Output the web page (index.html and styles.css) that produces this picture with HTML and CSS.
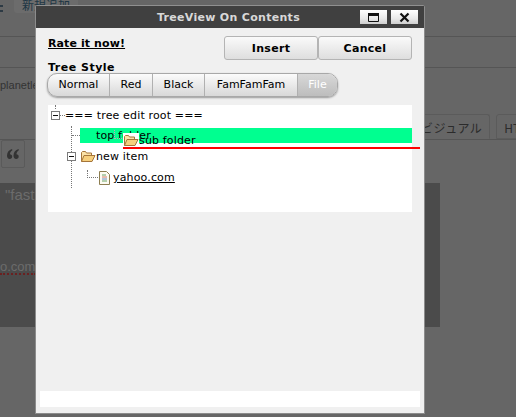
FILE: index.html
```html
<!DOCTYPE html>
<html>
  <head>
    <title>TreeView On Contents</title>
    <meta name="viewport" content="width=device-width, initial-scale=1.0" />
    <link rel="stylesheet" href="styles.css">
  </head>
  <body>
    <!-- Dimmed page behind the dialog -->
    <div class="page">
      <div class="page-top"><span class="menu-mark"></span><span class="new-link">新規追加</span></div>
      <div class="page-title"></div>
      <div class="page-url">planetle</div>
      <div class="page-tabs">
        <span class="tab tab-active">ビジュアル</span>
        <span class="tab">HT</span>
      </div>
      <div class="page-toolbar">
        <span class="quote-button">
          <svg width="12" height="10" viewBox="0 0 12 10"><path d="M5 0C2 1 0 3 0 6.500 0 8.500 1 10 2.700 10 4.200 10 5.200 9 5.200 7.600 5.200 6.200 4.200 5.300 3 5.300 3 3.500 3.900 2.300 5.400 1.300zM11.500 0C8.500 1 6.500 3 6.500 6.500 6.500 8.500 7.500 10 9.200 10 10.700 10 11.700 9 11.700 7.600 11.700 6.200 10.700 5.300 9.500 5.300 9.500 3.500 10.400 2.300 11.900 1.300z" fill="#333" /></svg>
        </span>
      </div>
      <div class="editor">
        <div class="editor-quote">"fast</div>
        <div class="editor-link">o.com</div>
      </div>
    </div>

    <div class="dialog">
      <div class="dialog-title">
        <span class="dialog-name">TreeView On Contents</span>
        <span class="win-button">
          <svg width="13" height="11" viewBox="0 0 13 11"><path d="M1.500 1.500h10v8h-10z" fill="none" stroke="#111" /><path d="M1 1h11v3H1z" fill="#111" /></svg>
        </span>
        <span class="win-button">
          <svg width="13" height="11" viewBox="0 0 13 11"><path d="M2.500 1.500l8 8M10.500 1.500l-8 8" fill="none" stroke="#111" stroke-width="2.200" /></svg>
        </span>
      </div>

      <div class="dialog-head">
        <a class="rate-link" href="#">Rate it now!</a>
        <div class="actions">
          <button class="action-button">Insert</button>
          <button class="action-button">Cancel</button>
        </div>
      </div>

      <div class="style-label">Tree Style</div>
      <div class="style-bar">
        <span class="style-item style-normal">Normal</span>
        <span class="style-item style-red">Red</span>
        <span class="style-item style-black">Black</span>
        <span class="style-item style-fam">FamFamFam</span>
        <span class="style-item style-file">File</span>
      </div>

      <div class="tree">
        <span class="guide guide-root"></span>
        <span class="guide guide-children"></span>
        <div class="tree-row row-root">
          <span class="toggle"></span><span class="dash dash-root"></span><span>=== tree edit root ===</span>
        </div>
        <div class="tree-row row-top">
          <span class="dash dash-top"></span><span class="top-label">top folder</span>
        </div>
        <div class="tree-row row-new">
          <span class="toggle"></span>
          <svg class="folder" width="16" height="13" viewBox="0 0 16 13"><path d="M1.500 11.500v-9l1-1h3l1 1.500h5v2" fill="#fbe3a8" stroke="#a5753a" /><path d="M1.500 11.500l2.500-6h11l-3 6z" fill="#f6cf7d" stroke="#a5753a" /></svg>
          <span>new item</span>
        </div>
        <div class="tree-row row-link">
          <span class="dash dash-link"></span>
          <svg class="page-icon" width="11" height="14" viewBox="0 0 11 14">
            <path d="M.5.5h7l3 3v10H.5z" fill="#fdfbf2" stroke="#8c7d50" />
            <path d="M3 4h4" stroke="#6aa56a" /><path d="M3 6h5" stroke="#d27a6a" /><path d="M3 8h5" stroke="#6a8fc0" /><path d="M3 10h5" stroke="#6aa56a" />
          </svg>
          <a class="tree-link" href="#">yahoo.com</a>
        </div>

        <!-- Node being dragged, with its drop marker -->
        <span class="drag-dash"></span>
        <div class="drag-node">
          <svg class="folder drag-folder" width="16" height="13" viewBox="0 0 16 13"><path d="M1.500 11.500v-9l1-1h3l1 1.500h5v2" fill="#fbe3a8" stroke="#a5753a" /><path d="M1.500 11.500l2.500-6h11l-3 6z" fill="#f6cf7d" stroke="#a5753a" /></svg>
          <span>sub folder</span>
        </div>
        <div class="drop-line"></div>
      </div>

      <div class="status"></div>
    </div>
  </body>
</html>
```

FILE: styles.css
```css
/* Base styles */
html,
body {
  margin: 0;
  padding: 0;
  height: 100%;
  overflow: hidden;
}

body {
  background-color: #666666;
  font-family: "DejaVu Sans", Verdana, sans-serif;
  font-size: 11px;
  color: #000;
}

/* Page behind the dialog */
.page {
  height: 417px;
  overflow: hidden;
  color: #3a3a3a;
}

.page-top {
  height: 36px;
  border-bottom: 1px solid #555;
  display: flex;
  align-items: flex-start;
}

.menu-mark {
  width: 3px;
  height: 3px;
  margin-top: 5px;
  border-top: 2px solid #2d3a44;
  border-bottom: 2px solid #2d3a44;
}

.new-link {
  margin-left: 11px;
  padding: 0 8px;
  height: 13px;
  background-color: #6c6c6c;
  border-radius: 0 0 3px 3px;
  font-family: "Noto Sans CJK JP", sans-serif;
  font-size: 12px;
  line-height: 9px;
  color: #1d3644;
  overflow: hidden;
}

.page-title {
  height: 30px;
  border-bottom: 1px solid #555;
}

.page-url {
  height: 37px;
  padding-top: 9px;
  font-family: "Liberation Sans", sans-serif;
  font-size: 11px;
  line-height: 17px;
  color: #333;
}

.page-tabs {
  height: 25px;
  padding-left: 420px;
  display: flex;
  gap: 6px;
  border-bottom: 1px solid #555;
  white-space: nowrap;
}

.tab {
  padding: 0 7px;
  height: 25px;
  box-sizing: border-box;
  border: 1px solid #5b5b5b;
  border-radius: 3px 3px 0 0;
  font-family: "Noto Sans CJK JP", sans-serif;
  font-size: 12px;
  line-height: 25px;
  color: #2b2b2b;
}

.tab-active {
  width: 72px;
  text-align: right;
  padding: 0 7px 0 0;
  letter-spacing: 0.5px;
  border-bottom-color: #666;
}

.page-toolbar {
  height: 43px;
  padding-left: 1px;
  box-sizing: border-box;
}

.quote-button {
  display: flex;
  align-items: center;
  justify-content: center;
  width: 24px;
  height: 28px;
  border: 1px solid #5a5a5a;
  border-radius: 2px;
  box-sizing: border-box;
}

.editor {
  width: 440px;
  height: 144px;
  background-color: #4b4b4b;
  font-family: "Liberation Sans", sans-serif;
  color: #6c6c6c;
}

.editor-quote {
  padding: 2px 0 0 5px;
  font-size: 15px;
  line-height: 19px;
}

.editor-link {
  margin-top: 56px;
  width: 36px;
  font-size: 13px;
  line-height: 13px;
  border-bottom: 2px dotted #6b2020;
}

/* Dialog */
.dialog {
  position: absolute;
  left: 35px;
  top: 5px;
  width: 390px;
  height: 409px;
  box-sizing: border-box;
  background-color: #f0f0f0;
  border: 1px solid #8c8c8c;
  border-top-color: #909090;
  border-radius: 3px 3px 0 0;
  padding: 0 4px;
}

.dialog-title {
  display: flex;
  align-items: center;
  height: 22px;
  margin: 0 -4px;
  padding: 0 6px 0 0;
  background-color: #404040;
  color: #d8d8d8;
  font-weight: bold;
  font-size: 11px;
  letter-spacing: 0.3px;
}

.dialog-name {
  flex: 1;
  text-align: center;
  padding-left: 65px;
}

.win-button {
  display: flex;
  align-items: center;
  justify-content: center;
  width: 27px;
  height: 14px;
  margin-left: 4px;
  background: linear-gradient(#fff, #e9e9e9 60%, #cfcfcf);
}

.dialog-head {
  display: flex;
  justify-content: space-between;
  padding: 8px 8px 0 8px;
  height: 32px;
}

.rate-link {
  margin-top: 1px;
  height: 14px;
  color: #000;
  font-weight: bold;
  font-size: 11px;
  line-height: 14px;
  letter-spacing: 0.1px;
}

.actions {
  display: flex;
}

.action-button {
  width: 94px;
  height: 24px;
  padding: 0;
  background: linear-gradient(#fafafa, #dedede);
  border: 1px solid #b4b4b4;
  border-radius: 3px;
  font-family: inherit;
  font-size: 11px;
  font-weight: bold;
  letter-spacing: 0.3px;
  color: #000;
}

.style-label {
  margin-top: -6px;
  padding-left: 8px;
  font-weight: bold;
  font-size: 11px;
  line-height: 12px;
  letter-spacing: 0.5px;
}

.style-bar {
  display: inline-flex;
  height: 22px;
  margin: -1px 0 0 7px;
  border: 1px solid #a8a8a8;
  border-radius: 10px;
  box-shadow: 0 1px 2px #999;
  background: linear-gradient(#fbfbfb, #d8d8d8);
  overflow: hidden;
}

.style-item {
  box-sizing: border-box;
  line-height: 22px;
  text-align: center;
  border-right: 1px solid #b0b0b0;
}

.style-normal { width: 62px; }
.style-red { width: 43px; }
.style-black { width: 52px; }
.style-fam { width: 93px; }

.style-file {
  width: 39px;
  border-right: none;
  background: linear-gradient(#d8d8d8, #bdbdbd);
  color: #fff;
}

/* Tree */
.tree {
  position: relative;
  height: 107px;
  margin: 8px 8px 0 8px;
  background-color: #fff;
  font-size: 11px;
  letter-spacing: 0.15px;
}

.tree-row {
  display: flex;
  align-items: center;
  height: 21px;
  white-space: nowrap;
}

.row-root {
  height: 20px;
  padding-left: 3px;
}

.row-top {
  height: 15px;
  margin: 3px 0 0 32px;
  background-color: #00ff90;
}

.row-new {
  margin-top: 3px;
  padding-left: 19px;
}

.row-link {
  padding-left: 39px;
}

.toggle {
  position: relative;
  display: block;
  width: 9px;
  height: 9px;
  box-sizing: border-box;
  border: 1px solid #7b7b7b;
  flex-shrink: 0;
  background-color: #fff;
}

.toggle::after {
  content: "";
  position: absolute;
  left: 1px;
  top: 3px;
  width: 5px;
  height: 1px;
  background-color: #111;
}

.guide {
  position: absolute;
  border-left: 1px dotted #777;
}

.guide-root {
  left: 7px;
  top: 0;
  height: 4px;
}

.guide-children {
  left: 23px;
  top: 21px;
  height: 62px;
}

.dash {
  display: block;
  border-top: 1px dotted #777;
  flex-shrink: 0;
}

.dash-root {
  width: 5px;
}

.dash-top {
  width: 8px;
  margin-left: -8px;
  margin-right: 16px;
}

.top-label {
  line-height: 15px;
}

.folder {
  margin: 0 0 0 4px;
  flex-shrink: 0;
}

.dash-link {
  width: 10px;
  height: 7px;
  margin-top: -7px;
  border-left: 1px dotted #777;
  border-top: none;
  border-bottom: 1px dotted #777;
}

.page-icon {
  margin: 0 3px 0 1px;
}

.tree-link {
  color: #000;
}

.drag-dash {
  position: absolute;
  left: 66px;
  top: 25px;
  width: 9px;
  height: 8px;
  border-left: 1px dotted #c9a0b0;
  border-bottom: 1px dotted #c9a0b0;
}

.drag-node {
  position: absolute;
  left: 75px;
  top: 27px;
  display: flex;
  align-items: center;
  height: 16px;
  white-space: nowrap;
}

.drag-folder {
  margin: 0;
  padding: 1px 0;
  background-color: #fff;
}

.drop-line {
  position: absolute;
  left: 75px;
  top: 42px;
  width: 297px;
  height: 2px;
  background-color: #ff0000;
}

.status {
  position: absolute;
  left: 4px;
  right: 4px;
  bottom: 6px;
  height: 16px;
  background-color: #fff;
}
```
